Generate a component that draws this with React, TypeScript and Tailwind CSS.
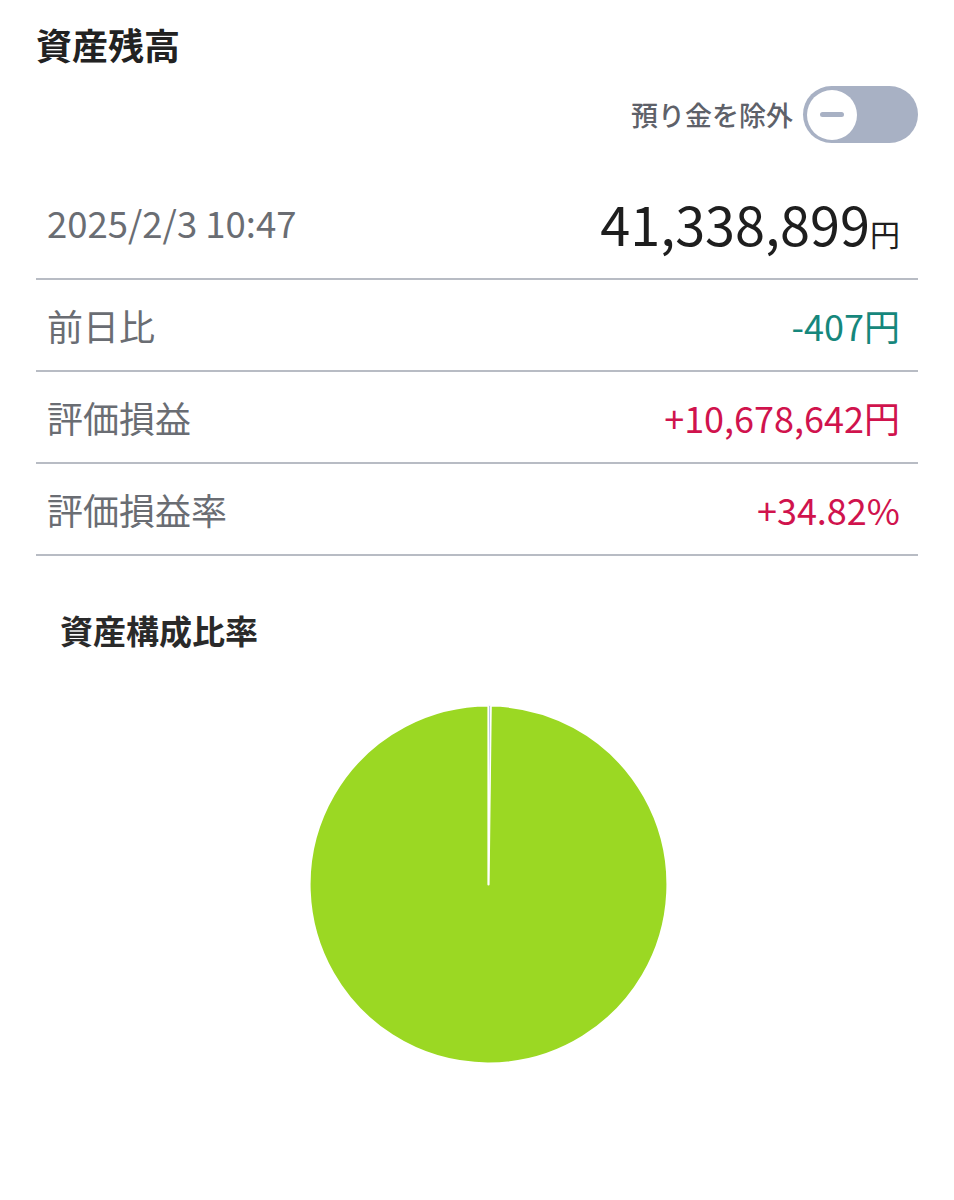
import React from "react";

const font = { fontFamily: '"Noto Sans CJK JP", "Noto Sans", sans-serif' };

function Pie() {
  const cx = 179.5;
  const cy = 179.5;
  const r = 179;
  const pt = (deg: number) => {
    const a = ((deg - 90) * Math.PI) / 180;
    return [cx + r * Math.cos(a), cy + r * Math.sin(a)];
  };
  const s = 0.7;
  const [x1, y1] = pt(0);
  const [x2, y2] = pt(s);
  const slice = `M ${cx} ${cy} L ${x1} ${y1} A ${r} ${r} 0 0 1 ${x2} ${y2} Z`;
  const big = `M ${cx} ${cy} L ${x2} ${y2} A ${r} ${r} 0 1 1 ${x1} ${y1} Z`;
  return (
    <svg width="359" height="359" viewBox="0 0 359 359">
      <path d={big} fill="#9bd823" stroke="#ffffff" strokeWidth="2.2" strokeLinejoin="round" />
      <path d={slice} fill="#b6c6e2" stroke="#ffffff" strokeWidth="1" />
    </svg>
  );
}

function Row({ label, value, color }: { label: string; value: string; color: string }) {
  return (
    <div className="flex h-[92px] items-center justify-between border-b-2 border-[#b8bcc4] pl-[11px] pr-[18px]">
      <span className="text-[36px] leading-none text-[#6a6d73]">{label}</span>
      <span className={`text-[36px] leading-none ${color}`}>{value}</span>
    </div>
  );
}

export default function App() {
  return (
    <div className="min-h-[1200px] w-[954px] bg-white" style={font}>
      <h1 className="pl-[36px] pt-[22px] text-[36px] font-bold leading-[44px] text-[#222222]">資産残高</h1>

      <div className="mt-[20px] flex items-center justify-end gap-[10px] pr-[36px]">
        <span className="text-[27px] font-medium leading-none text-[#5e6169]">預り金を除外</span>
        <div className="flex h-[57px] w-[115px] items-center rounded-full bg-[#a8b1c4] pl-[4px]">
          <div className="flex h-[50px] w-[50px] items-center justify-center rounded-full bg-white">
            <div className="h-[5px] w-[24px] rounded-full bg-[#a8b1c4]" />
          </div>
        </div>
      </div>

      <div className="mx-[36px] mt-[25px]">
        <div className="flex h-[112px] items-center justify-between border-b-2 border-[#b8bcc4] pl-[11px] pr-[18px]">
          <span className="text-[36.5px] leading-none text-[#6a6d73]">2025/2/3 10:47</span>
          <span className="flex items-baseline leading-none text-[#1e1e1e]">
            <span className="text-[54px]">41,338,899</span>
            <span className="text-[30px]">円</span>
          </span>
        </div>
        <Row label="前日比" value="-407円" color="text-[#16877c]" />
        <Row label="評価損益" value="+10,678,642円" color="text-[#d0134d]" />
        <Row label="評価損益率" value="+34.82%" color="text-[#d0134d]" />
      </div>

      <h2 className="mt-[52px] pl-[60px] text-[33px] font-bold leading-[44px] text-[#2a2a2a]">資産構成比率</h2>

      <div className="ml-[309px] mt-[53px]">
        <Pie />
      </div>
    </div>
  );
}
